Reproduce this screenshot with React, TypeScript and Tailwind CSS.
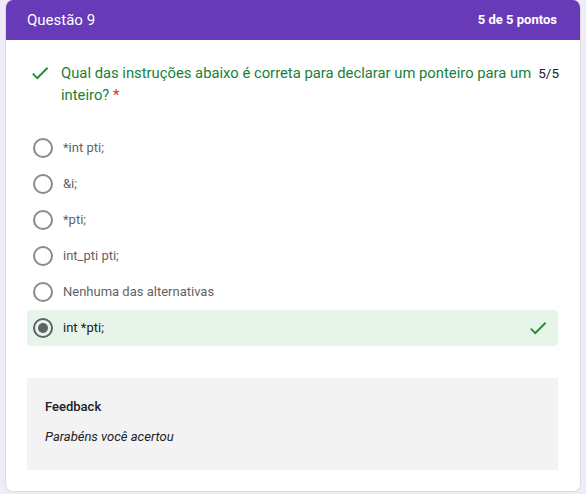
import React from "react";

const Check = ({ className }: { className?: string }) => (
  <svg viewBox="0 0 24 24" className={className} fill="currentColor">
    <path d="M9 16.17L4.83 12l-1.42 1.41L9 19 21 7l-1.41-1.41z" />
  </svg>
);

const options = ["*int pti;", "&i;", "*pti;", "int_pti pti;", "Nenhuma das alternativas"];

export default function App() {
  return (
    <div className="min-h-[494px] w-[586px] bg-[#f0ebf8]" style={{ fontFamily: "Roboto, 'Liberation Sans', sans-serif" }}>
      <div className="ml-[5px] w-[576px] h-[492px] bg-white rounded-lg border border-[#dadce0] border-t-0 overflow-hidden flex flex-col">
        <div className="h-[40px] bg-[#673ab7] flex items-center justify-between pl-[21px] pr-[23px] text-white">
          <span className="text-[15px] font-normal">Questão 9</span>
          <span className="text-[13px] font-bold">5 de 5 pontos</span>
        </div>
        <div className="pt-[22px] pl-[21px] pr-[21px]">
          <div className="flex items-start">
            <Check className="w-[22px] h-[22px] text-[#1e8e3e] ml-[2px] mt-0 shrink-0" />
            <p className="ml-[10px] flex-1 text-[14.8px] leading-[22px] text-[#188038]">
              Qual das instruções abaixo é correta para declarar um ponteiro para um inteiro?{" "}
              <span className="text-[#d93025]">*</span>
            </p>
            <div className="ml-[6px] text-[13.5px] leading-[22px] text-[#202124]">5/5</div>
          </div>
        </div>
        <div className="mt-[24px] pl-[21px] pr-[22px] flex flex-col">
          {options.map((o) => (
            <div key={o} className="h-[36px] flex items-center pl-[6px]">
              <div className="w-[20px] h-[20px] rounded-full border-2 border-[#8a8a8a] shrink-0" />
              <span className="ml-[10px] text-[13px] text-[#5f6368]">{o}</span>
            </div>
          ))}
          <div className="h-[36px] flex items-center pl-[6px] pr-[9px] bg-[#e6f4ea] rounded">
            <div className="w-[20px] h-[20px] rounded-full border-2 border-[#5f6368] shrink-0 flex items-center justify-center">
              <div className="w-[10px] h-[10px] rounded-full bg-[#5f6368]" />
            </div>
            <span className="ml-[10px] text-[13px] text-[#202124] flex-1">int *pti;</span>
            <Check className="w-[22px] h-[22px] text-[#1e8e3e]" />
          </div>
          <div className="mt-[32px] h-[92px] bg-[#f3f3f3] pl-[18px] pt-[19px]">
            <div className="text-[13px] leading-[20px] font-medium text-[#202124]">Feedback</div>
            <div className="mt-[10px] text-[13px] leading-[20px] italic text-[#202124]">Parabéns você acertou</div>
          </div>
        </div>
      </div>
    </div>
  );
}
